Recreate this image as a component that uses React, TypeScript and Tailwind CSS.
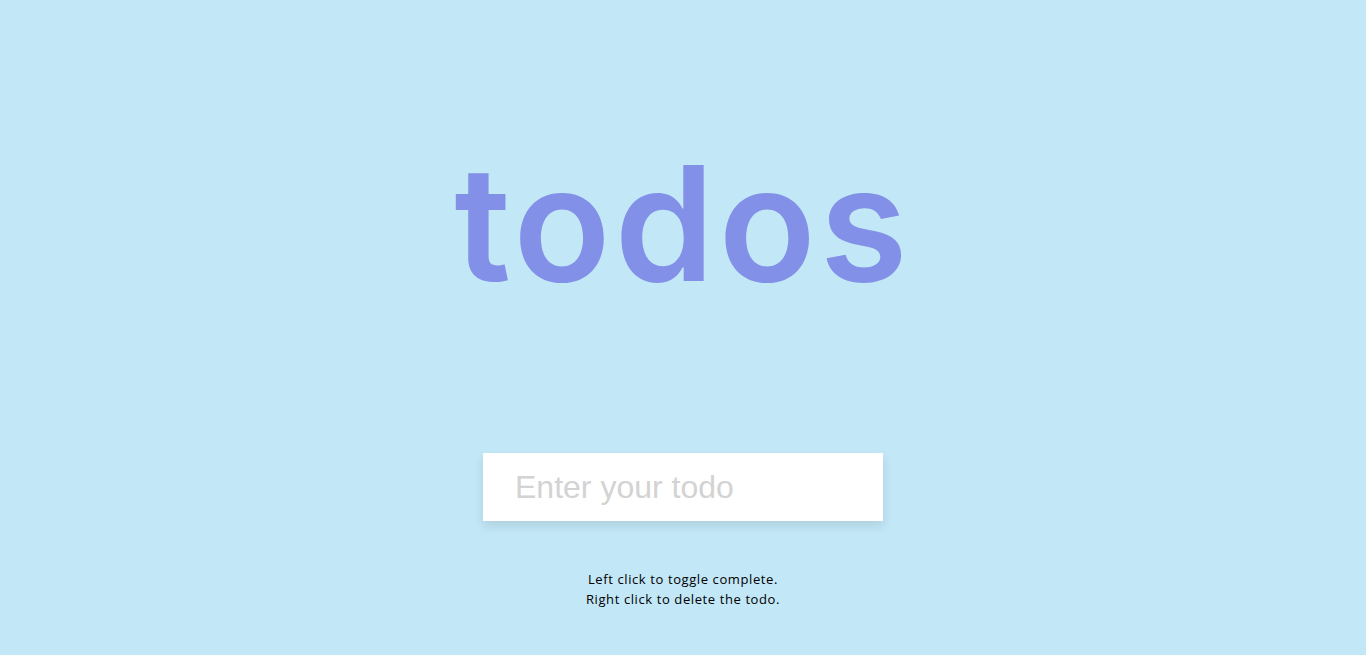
import React, { useState } from 'react';

interface Todo {
  text: string;
  completed: boolean;
}

const App: React.FC = () => {
  const [value, setValue] = useState('');
  const [todos, setTodos] = useState<Todo[]>([]);

  const addTodo = (e: React.FormEvent) => {
    e.preventDefault();
    if (!value.trim()) return;
    setTodos([...todos, { text: value, completed: false }]);
    setValue('');
  };

  return (
    <div className="min-h-screen w-full bg-[#c2e7f7] flex flex-col items-center [font-family:Inter,'Noto_Sans',sans-serif]">
      <h1 className="mt-[143px] text-[160px] leading-[1] font-semibold text-[#8390e8] tracking-[4px] select-none">
        todos
      </h1>

      <form onSubmit={addTodo} className="mt-[150px]">
        <input
          value={value}
          onChange={(e) => setValue(e.target.value)}
          placeholder="Enter your todo"
          className="w-[400px] h-[68px] bg-white px-8 text-[32px] text-[#333] outline-none border-none shadow-[0_5px_10px_rgba(0,0,0,0.1)] placeholder:text-[#d3d3d3] [font-family:'Liberation_Sans',Arial,sans-serif]"
        />
        {todos.length > 0 && (
          <ul className="w-[400px] bg-white">
            {todos.map((todo, i) => (
              <li
                key={i}
                onClick={() =>
                  setTodos(todos.map((t, j) => (j === i ? { ...t, completed: !t.completed } : t)))
                }
                onContextMenu={(e) => {
                  e.preventDefault();
                  setTodos(todos.filter((_, j) => j !== i));
                }}
                className={`px-8 py-4 text-[24px] border-t border-[#eee] ${todo.completed ? 'line-through text-[#bbb]' : 'text-[#555]'}`}
              >
                {todo.text}
              </li>
            ))}
          </ul>
        )}
      </form>

      <div className="mt-[48px] text-center text-[13px] leading-[20px] tracking-[0.6px] text-black [font-family:'Open_Sans',sans-serif]">
        <p>Left click to toggle complete.</p>
        <p>Right click to delete the todo.</p>
      </div>
    </div>
  );
};

export default App;
